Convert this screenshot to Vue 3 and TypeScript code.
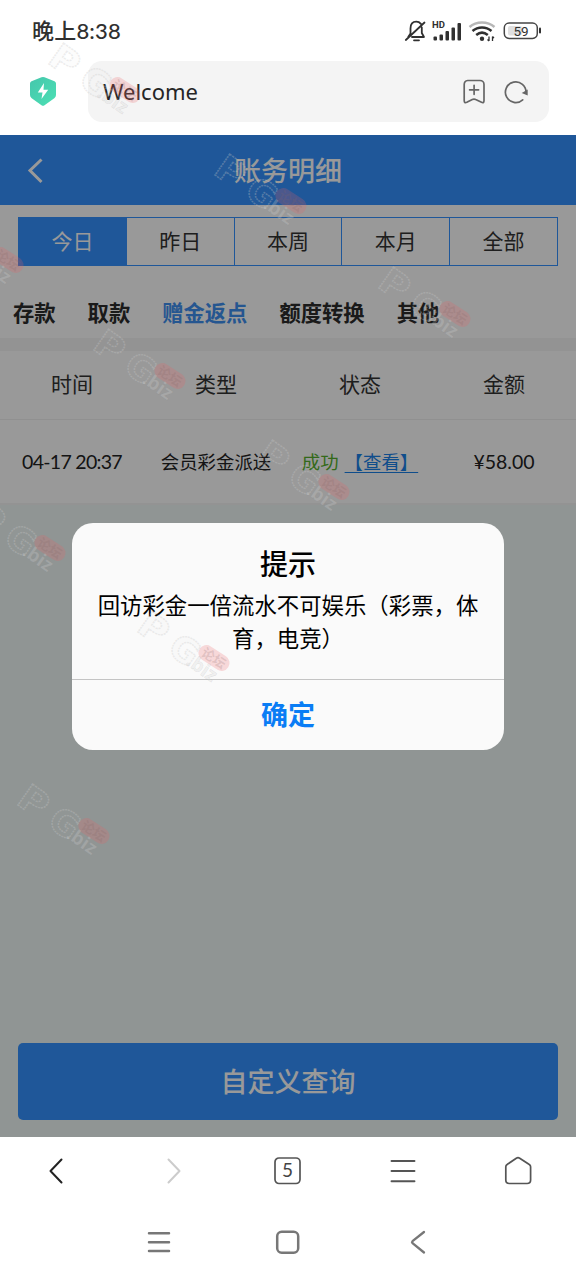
<script setup lang="ts">
import { ref } from 'vue'

const ranges = ['今日', '昨日', '本周', '本月', '全部']
const kinds = ['存款', '取款', '赠金返点', '额度转换', '其他']
const columns = ['时间', '类型', '状态', '金额']
const activeRange = ref(0)
const activeKind = ref(2)
const marks = [
  [46, 39], [212, 150], [-71, 209], [376, 263], [91, 325],
  [255, 436], [-29, 497], [135, 607], [15, 780],
]
</script>

<template>
  <div class="screen">
    <header class="status">
      <span class="clock">晚上8:38</span>
      <svg class="status-icons" width="140" height="26" viewBox="0 0 140 26" fill="none">
        <g stroke="#303030" stroke-width="1.8" stroke-linecap="round" stroke-linejoin="round">
          <path d="M5.2 19 7.500 15.500V10.500C7.500 6 10 3.700 13.300 3.700c2 0 3.500.8 4.600 2.100M18.800 9.500v5.500l2.200 4H9M21.500 4.500 2.800 22M11 22.300h5" />
        </g>
        <text x="29" y="10" class="hd">HD</text>
        <g fill="#303030">
          <rect x="30.500" y="18.500" width="3.500" height="4" rx="1" /><rect x="36.500" y="16.500" width="3.500" height="6" rx="1" />
          <rect x="42.500" y="13" width="3.500" height="9.500" rx="1" /><rect x="48.500" y="9.500" width="3.500" height="13" rx="1" />
          <rect x="54.500" y="5" width="3.500" height="17.500" rx="1" />
        </g>
        <g stroke-width="2.500">
          <path d="M66.500 9c7-6 18-6 25 0" stroke="#b7b7b7" />
          <path d="M69.500 13c5.500-4.700 13.500-4.700 19 0" stroke="#303030" />
          <path d="M73.200 17c3.600-3 8-3 11.600 0" stroke="#303030" />
        </g>
        <circle cx="79" cy="20.800" r="2.200" fill="#303030" />
        <path d="M86 18.500v4.500m0 0-1.500-1.500M89.500 23v-4.500m0 0 1.500 1.500" stroke="#303030" stroke-width="1.300" />
        <rect x="101.300" y="5" width="33" height="15.400" rx="4.800" stroke="#454545" stroke-width="1.500" />
        <rect x="105" y="8" width="14" height="9.500" rx="2" fill="#e0e0e0" />
        <path d="M137 10.500v4" stroke="#303030" stroke-width="2" stroke-linecap="round" />
        <text x="118" y="17.500" text-anchor="middle" class="battery">59</text>
      </svg>
    </header>

    <div class="address">
      <svg class="shield" width="28" height="32" viewBox="0 0 28 32">
        <defs><linearGradient id="mint" x1="0" y1="0" x2="1" y2="1"><stop stop-color="#45c6ac" /><stop offset="1" stop-color="#4ce0b4" /></linearGradient></defs>
        <path d="M12.500 1.300Q14 .5 15.500 1.300L25.500 5.300Q27 6 27 7.500v11.500q0 2-1.700 3.200L15.500 29.200Q14 30.300 12.500 29.200L2.700 22.200Q1 21 1 19V7.500q0-1.500 1.500-2.200z" fill="url(#mint)" />
        <path d="M15 7 8.800 16.500h4.700l-1 6.500 6.700-9.300h-4.700z" fill="#fff" />
      </svg>
      <div class="urlbar">
        <span>Welcome</span>
        <svg class="url-icons" width="70" height="30" viewBox="0 0 70 30" fill="none" stroke="#666" stroke-width="1.700" stroke-linejoin="round" stroke-linecap="round">
          <path d="M5.500 3.500h12.500a4 4 0 0 1 4 4v16q0 3-2.500 1.800L13.700 22.500q-1.700-.9-3.400 0l-5.500 2.800q-2.600 1.200-2.600-1.800v-16a4 4 0 0 1 3.500-4M7.600 12.800h9M12.100 8.300v9" />
          <path d="M60.700 22.800a10.300 10.300 0 1 1 3.300-7" />
          <path d="M65.700 12.500v6l-6-2.500z" fill="#666" stroke="none" />
        </svg>
      </div>
    </div>

    <main class="page">
      <div class="titlebar">
        <svg class="back" width="20" height="28" viewBox="0 0 20 28" fill="none" stroke="#fff" stroke-width="3"><path d="M16.500 3.500 5 14.500l11.500 11.500" /></svg>
        <h1>账务明细</h1>
      </div>
      <div class="filters">
        <div class="ranges">
          <button v-for="(r, i) in ranges" :key="r" :class="{ active: i === activeRange }" @click="activeRange = i">{{ r }}</button>
        </div>
        <nav class="kinds">
          <a v-for="(k, i) in kinds" :key="k" :class="{ active: i === activeKind }" @click="activeKind = i">{{ k }}</a>
        </nav>
      </div>
      <section class="table">
        <div class="row head"><span v-for="c in columns" :key="c">{{ c }}</span></div>
        <div class="row data">
          <span class="time">04-17 20:37</span>
          <span class="kind">会员彩金派送</span>
          <span class="state"><b>成功</b><u>【查看】</u></span>
          <span class="amount">¥58.00</span>
        </div>
      </section>
      <button class="query">自定义查询</button>

      <div class="mask">
        <div class="dialog">
          <h2>提示</h2>
          <p>回访彩金一倍流水不可娱乐（彩票，体育，电竞）</p>
          <button>确定</button>
        </div>
      </div>
    </main>

    <nav class="browser-nav">
      <svg viewBox="0 0 32 32" fill="none" stroke="#222" stroke-width="2" stroke-linecap="round" stroke-linejoin="round"><path d="M20.500 4.500 9.500 16l11 11.500" /></svg>
      <svg viewBox="0 0 32 32" fill="none" stroke="#ccc" stroke-width="2" stroke-linecap="round" stroke-linejoin="round"><path d="M11.500 4.500 22.500 16l-11 11.500" /></svg>
      <svg viewBox="0 0 32 32" fill="none" stroke="#555" stroke-width="1.700"><rect x="3" y="3" width="25" height="25.500" rx="4" /><text x="15.500" y="22.300" text-anchor="middle" class="tab-count">5</text></svg>
      <svg viewBox="0 0 32 32" fill="none" stroke="#555" stroke-width="1.900" stroke-linecap="round"><path d="M4.500 6h23M4.500 16h23M4.500 26.300h23" /></svg>
      <svg viewBox="0 0 32 32" fill="none" stroke="#555" stroke-width="1.700" stroke-linejoin="round"><path d="M13.300 3.200q1.700-1 3.400 0L26.300 9.500q1.300.8 1.300 2.300V25q0 3.500-3.500 3.500H6.300q-3.500 0-3.500-3.500V11.800q0-1.500 1.300-2.300z" /></svg>
    </nav>
    <nav class="system-nav">
      <svg viewBox="0 0 28 28" fill="none" stroke="#777" stroke-width="2.500" stroke-linecap="round"><path d="M4 5.300h20M4 14.200h20M4 23h20" /></svg>
      <svg viewBox="0 0 28 28" fill="none" stroke="#777" stroke-width="2.500"><rect x="3.200" y="3.700" width="21" height="21" rx="4.500" /></svg>
      <svg viewBox="0 0 28 28" fill="none" stroke="#777" stroke-width="2.300" stroke-linecap="round" stroke-linejoin="round"><path d="M20 4 8.500 13.200q-1 1 0 2L20 24.500" /></svg>
    </nav>

    <svg class="watermarks" width="576" height="1280" viewBox="0 0 576 1280">
      <g v-for="(m, i) in marks" :key="i" :transform="`translate(${m[0]} ${m[1]})`">
        <g class="outline">
          <text transform="translate(0 23) rotate(35) scale(1.12 1)">P</text>
          <text transform="translate(31 45) rotate(35)">G</text>
        </g>
        <rect x="-17" y="-8" width="34" height="16" rx="8" transform="translate(79 51) rotate(33)" class="pill" />
        <text transform="translate(79 51) rotate(33)" y="5" text-anchor="middle" class="forum">论坛</text>
        <text transform="translate(50 57) rotate(35)" class="biz">.biz</text>
      </g>
    </svg>
  </div>
</template>

<style>
body { margin: 0; background: #fff; }
</style>

<style scoped>
* { box-sizing: border-box; }
.screen {
  position: relative; width: 576px; height: 1280px; overflow: hidden; background: #fff;
  display: flex; flex-direction: column;
  font-family: "Noto Sans CJK SC", "Noto Sans", sans-serif; color: #000;
}
button { font: inherit; border: 0; background: none; padding: 0; margin: 0; }
svg { display: block; }
.status { height: 61px; padding: 0 33px 0 32px; display: flex; justify-content: space-between; align-items: center; }
.clock { font-family: Lato, "Noto Sans CJK SC", sans-serif; font-size: 22px; line-height: 32px; letter-spacing: .2px; color: #303030; font-weight: 500; }
.hd { font: 700 9.500px Roboto, sans-serif; fill: #303030; }
.battery { font: 400 13.500px Roboto, sans-serif; fill: #303030; }
.address { height: 74px; padding: 0 27px 13px 29px; display: flex; align-items: center; }
.urlbar {
  flex: 1; height: 61px; margin-left: 31px; padding: 0 17px 0 15px; border-radius: 14px; background: #f4f4f4;
  display: flex; align-items: center; justify-content: space-between;
  font-family: "Noto Sans", sans-serif; font-size: 22px; color: #262626;
}
.urlbar span { line-height: 30px; margin-bottom: 2px; }
.page { position: relative; height: 1002px; background: #f0f9f7; display: flex; flex-direction: column; }
.titlebar { height: 70px; flex: none; background: #3492ff; display: grid; grid-template-columns: 60px 1fr 60px; align-items: center; }
.back { margin-left: 25px; }
h1 { margin: 0; text-align: center; font-size: 27px; line-height: 40px; font-weight: 500; color: #fff; }
.filters { height: 133px; flex: none; background: #fff; padding-top: 12px; }
.ranges { height: 49px; margin: 0 18px; display: flex; border: 1px solid #3492ff; }
.ranges button { flex: 1; font-size: 21px; line-height: 44px; padding-bottom: 3px; color: #333; }
.ranges button + button { border-left: 1px solid #3492ff; }
.ranges .active { background: #3492ff; color: #fff; }
.kinds { display: flex; gap: 32px; padding: 30px 13px 0; font-size: 21.300px; line-height: 32px; font-weight: 700; color: #2c2c2c; }
.kinds .active { color: #3e8ff0; }
.table { height: 167px; flex: none; border-top: 13px solid #f5f5f5; border-bottom: 2px solid #f5f5f5; background: #fff; }
.row { display: grid; grid-template-columns: repeat(4, 1fr); text-align: center; white-space: nowrap; }
.head { height: 69px; line-height: 65px; font-size: 21px; color: #333; border-bottom: 1px solid #f0f0f0; }
.data { height: 83px; line-height: 83px; font-size: 18.400px; color: #222; }
.time, .amount { font-family: Lato, "Noto Sans", sans-serif; font-size: 19.500px; }
.time { letter-spacing: -.7px; }
.state { display: flex; justify-content: center; gap: 6px; }
.state b { font-weight: 400; color: #55b02c; }
.state u { color: #1a80e8; text-underline-offset: 3px; }
.query { height: 77px; margin: auto 18px 17px; border-radius: 5px; background: #3492ff; color: #fff; font-size: 27px; font-weight: 500; line-height: 76px; padding-bottom: 1px; }
.mask { position: absolute; inset: 0; background: rgba(0, 0, 0, .4); }
.dialog {
  width: 432px; height: 227px; margin: 388px auto 0; border-radius: 21px; background: #fafafa; overflow: hidden;
  display: flex; flex-direction: column; text-align: center;
}
h2 { margin: 20px 0 0; font-size: 28px; line-height: 40px; font-weight: 500; }
p { margin: 5px 24px 0; font-size: 22.400px; line-height: 33px; }
.dialog button { margin-top: auto; height: 71px; border-top: 1px solid #c4c4c4; color: #0a7df5; font-size: 27px; line-height: 65px; padding-bottom: 3px; font-weight: 700; }
.browser-nav { height: 67px; display: grid; grid-template-columns: repeat(5, 115.400px); justify-content: center; align-items: center; justify-items: center; flex: none; }
.browser-nav svg { width: 32px; height: 32px; }
.tab-count { font: 19px Lato, sans-serif; fill: #444; stroke: none; }
.system-nav { height: 76px; display: grid; grid-template-columns: repeat(3, 129.500px); justify-content: center; align-items: center; justify-items: center; }
.system-nav svg { width: 28px; height: 28px; }
.watermarks { position: absolute; inset: 0; pointer-events: none; }
.outline text { font: 700 35px "DejaVu Sans", sans-serif; fill: rgba(190, 190, 190, .04); stroke: rgba(200, 200, 200, .33); stroke-width: 1.500px; stroke-dasharray: 2 .8; }
.pill { fill: rgba(238, 95, 100, .22); }
.forum { font: 700 13px "Noto Sans CJK SC", sans-serif; fill: rgba(130, 100, 100, .2); }
.biz { font: 700 19px "Open Sans", sans-serif; fill: rgba(212, 212, 212, .27); stroke: rgba(120, 120, 120, .13); stroke-width: .6px; }
</style>
